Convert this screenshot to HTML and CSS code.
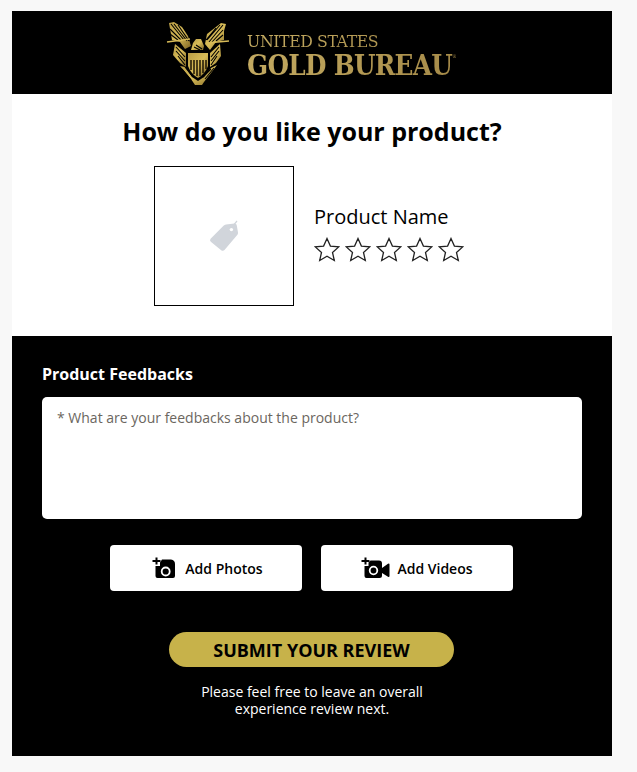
FILE: index.html
```html
<!DOCTYPE html>
<html lang="en">
  <head>
    <meta charset="UTF-8" />
    <meta name="viewport" content="width=device-width, initial-scale=1.0" />
    <title>Product Review</title>
    <link rel="stylesheet" href="styles.css">
  </head>
  <body>
    <div class="card">
      <header class="brand">
        <svg class="eagle" width="66" height="66" viewBox="7 5 66 66">
          <defs>
            <linearGradient id="gold" x1="0" y1="0" x2="1" y2="1">
              <stop offset="0" stop-color="#b89c45" />
              <stop offset="0.5" stop-color="#d8bc58" />
              <stop offset="1" stop-color="#7d6423" />
            </linearGradient>
          </defs>
          <g fill="url(#gold)">
            <path d="M11 7 L16 6 L24 11 L30 20 L33 30 L27 33 L22 26 L14 24 Z" />
            <path d="M63 7 L68 8 L66 15 L66 24 L58 26 L52 34 L47 28 L49 18 Z" />
            <path d="M35 27 L38 23 L43 23 L46 30 L45 34 L33 34 Z" />
            <path d="M17 28 L28 37 L28 51 L22 47 L15 39 Z" />
            <path d="M62 28 L52 37 L52 51 L58 47 L63 40 Z" />
            <path d="M30 37 H50 V50 Q47 58 40 62 Q33 58 30 50 Z" />
            <path d="M22 50 L27 51 L34 61 L40 65 L46 61 L53 52 L59 49 L53 57 L46 66 L44 69 L37 69 L33 63 Z" />
          </g>
          <g fill="none" stroke="#000" stroke-width="1.1">
            <path d="M13 8 L26 24 M16 8 L29 25 M20 9 L31 25 M12 13 L23 24 M12 18 L20 24" />
            <path d="M65 9 L51 26 M62 9 L49 24 M58 12 L48 24 M65 14 L54 26 M65 19 L58 25" />
            <path d="M18 31 L27 41 M18 35 L27 45 M20 40 L27 49 M61 31 L53 41 M61 35 L53 45 M59 40 L53 49" />
            <path d="M24 53 L33 64 M27 51 L35 61 M56 52 L47 63 M53 53 L45 61" />
            <path d="M38 29 L44 33 M36 31 L42 34" />
          </g>
          <path d="M33 44 V54 M36 44 V58 M39 44 V60 M42 44 V60 M45 44 V57 M48 44 V53" fill="none" stroke="#1c1504" stroke-width="1.5" />
          <path d="M9 26 L32 23 M48 27 L71 25" fill="none" stroke="#d8bb58" stroke-width="1.6" />
        </svg>
        <div class="wordmark">
          <div class="wordmark-top">UNITED STATES</div>
          <div class="wordmark-main">GOLD BUREAU<sup>®</sup></div>
        </div>
      </header>

      <section class="product">
        <h1>How do you like your product?</h1>
        <div class="product-row">
          <div class="thumb">
            <svg width="36" height="36" viewBox="-1 0 36 36">
              <path d="M30 3 L26.6 7.2" stroke="#d1d5db" stroke-width="1.2" fill="none" />
              <path d="M19 6.5 L27.5 5.5 Q29.5 5.3 29.8 7.5 L31 14.5 Q31.2 16 30.2 17 L17.5 32 Q16 33.5 14.2 32.2 L3.8 23.8 Q2.3 22.4 3.6 20.8 L16.5 7.8 Q17.5 6.7 19 6.5 Z" fill="#d1d5db" />
              <circle cx="24.4" cy="11.6" r="1.7" fill="#fff" />
            </svg>
          </div>
          <div class="product-info">
            <div class="product-name">Product Name</div>
            <div class="stars">
              <svg width="26" height="25" viewBox="0 0 26 25"><path class="star" d="M13 1.5 L16.4 9.1 L24.7 9.9 L18.5 15.4 L20.3 23.5 L13 19.3 L5.7 23.5 L7.5 15.4 L1.3 9.9 L9.6 9.1 Z" /></svg>
              <svg width="26" height="25" viewBox="0 0 26 25"><path class="star" d="M13 1.5 L16.4 9.1 L24.7 9.9 L18.5 15.4 L20.3 23.5 L13 19.3 L5.7 23.5 L7.5 15.4 L1.3 9.9 L9.6 9.1 Z" /></svg>
              <svg width="26" height="25" viewBox="0 0 26 25"><path class="star" d="M13 1.5 L16.4 9.1 L24.7 9.9 L18.5 15.4 L20.3 23.5 L13 19.3 L5.7 23.5 L7.5 15.4 L1.3 9.9 L9.6 9.1 Z" /></svg>
              <svg width="26" height="25" viewBox="0 0 26 25"><path class="star" d="M13 1.5 L16.4 9.1 L24.7 9.9 L18.5 15.4 L20.3 23.5 L13 19.3 L5.7 23.5 L7.5 15.4 L1.3 9.9 L9.6 9.1 Z" /></svg>
              <svg width="26" height="25" viewBox="0 0 26 25"><path class="star" d="M13 1.5 L16.4 9.1 L24.7 9.9 L18.5 15.4 L20.3 23.5 L13 19.3 L5.7 23.5 L7.5 15.4 L1.3 9.9 L9.6 9.1 Z" /></svg>
            </div>
          </div>
        </div>
      </section>

      <section class="feedback">
        <label for="feedbackText">Product Feedbacks</label>
        <textarea id="feedbackText" placeholder="* What are your feedbacks about the product?"></textarea>

        <div class="uploads">
          <button type="button" class="upload-btn">
            <svg width="24" height="22" viewBox="0 0 24 22">
              <path d="M3.5 0.5 H5.5 V3 H8.5 V5 H5.5 V7.5 H3.5 V5 H0.5 V3 H3.5 Z" fill="#000" />
              <path d="M10 2.5 H19 Q21 2.5 22 4 Q23 5 23 7 V19 Q23 21 21 21 H5.5 Q3.5 21 3.5 19 V9 H8 V5.5 Z" fill="#000" />
              <circle cx="13.7" cy="14.5" r="4" fill="none" stroke="#fff" stroke-width="1.8" />
            </svg>
            <span>Add Photos</span>
          </button>
          <button type="button" class="upload-btn upload-video">
            <svg width="29" height="22" viewBox="0 0 29 22">
              <path d="M3.5 0.5 H5.5 V3 H8.5 V5 H5.5 V7.5 H3.5 V5 H0.5 V3 H3.5 Z" fill="#000" />
              <path d="M9.5 3.5 H18 Q21 3.5 21 6.5 V18.5 Q21 21 18.5 21 H5.5 Q3.5 21 3.5 19 V9 H7.5 V5.5 Z" fill="#000" />
              <path d="M21 11 L27 6.8 Q28.5 6 28.5 7.6 V19 Q28.5 20.6 27 19.8 L21 16 Z" fill="#000" />
              <circle cx="12.5" cy="13.5" r="3.8" fill="none" stroke="#fff" stroke-width="1.8" />
            </svg>
            <span>Add Videos</span>
          </button>
        </div>

        <button type="button" class="submit-btn">SUBMIT YOUR REVIEW</button>
        <p class="note">Please feel free to leave an overall<br>experience review next.</p>
      </section>
    </div>
  </body>
</html>
```

FILE: styles.css
```css
body {
  margin: 0;
  padding: 11px 25px 16px 12px;
  background: #f8f8f8;
  font-family: "Open Sans", sans-serif;
  color: #000;
}

.card {
  width: 600px;
  background: #000;
}

.brand {
  height: 83px;
  display: flex;
  justify-content: center;
  align-items: center;
  gap: 16px;
  padding-right: 3px;
  background: #000;
}

.eagle {
  margin-top: 2px;
}

.wordmark {
  font-family: "DejaVu Serif Condensed", "DejaVu Serif", serif;
  background: linear-gradient(100deg, #c4ab62, #a58a48);
  -webkit-background-clip: text;
  background-clip: text;
  color: transparent;
  margin-top: 6px;
}

.wordmark-top {
  font-size: 17.5px;
  line-height: 20px;
  letter-spacing: -0.4px;
  white-space: nowrap;
}

.wordmark-main {
  font-size: 27.5px;
  font-weight: bold;
  line-height: 29px;
  letter-spacing: -0.7px;
  white-space: nowrap;
}

.wordmark-main sup {
  font-size: 5px;
  font-weight: normal;
  vertical-align: 17px;
  line-height: 0;
}

.product {
  height: 242px;
  background: #fff;
  box-sizing: border-box;
  padding-top: 20px;
}

h1 {
  margin: 0;
  font-size: 25px;
  font-weight: 700;
  line-height: 34px;
  text-align: center;
}

.product-row {
  display: flex;
  align-items: center;
  gap: 20px;
  margin: 18px 0 0 142px;
}

.thumb {
  width: 140px;
  height: 140px;
  box-sizing: border-box;
  border: 1px solid #000;
  display: flex;
  justify-content: center;
  align-items: center;
}

.product-info {
  padding-bottom: 8px;
}

.product-name {
  font-size: 20px;
  line-height: 27px;
}

.stars {
  display: flex;
  gap: 5px;
  margin-top: 7px;
}

.star {
  fill: #fff;
  stroke: #222;
  stroke-width: 1.3;
}

.feedback {
  height: 420px;
  box-sizing: border-box;
  padding: 27px 30px 0;
  display: flex;
  flex-direction: column;
  align-items: center;
}

label {
  align-self: flex-start;
  color: #fff;
  font-size: 16px;
  font-weight: 700;
  line-height: 22px;
}

textarea {
  display: block;
  width: 100%;
  height: 122px;
  box-sizing: border-box;
  margin-top: 12px;
  padding: 11px 15px;
  border: 0;
  border-radius: 5px;
  background: #fff;
  font-family: "Open Sans", sans-serif;
  font-size: 14px;
  line-height: 19px;
  resize: none;
}

textarea::placeholder {
  color: #6b6660;
  opacity: 1;
}

.uploads {
  display: flex;
  gap: 19px;
  margin: 26px 1px 0 0;
}

.upload-btn {
  width: 192px;
  height: 46px;
  display: flex;
  justify-content: center;
  align-items: center;
  gap: 9px;
  border: 0;
  border-radius: 4px;
  background: #fff;
  font-family: "Open Sans", sans-serif;
  font-size: 14px;
  font-weight: 600;
  color: #000;
  padding: 0 0 0 3px;
}

.upload-video {
  gap: 7px;
  padding: 0;
}

.submit-btn {
  width: 285px;
  height: 35px;
  margin: 41px 1px 0 0;
  border: 0;
  border-radius: 18px;
  background: #c7b24a;
  font-family: "Open Sans", sans-serif;
  font-size: 18px;
  font-weight: 700;
  color: #000;
  padding: 0;
}

.note {
  margin: 16px 0 0;
  color: #fff;
  font-size: 14px;
  line-height: 17px;
  text-align: center;
}
```
